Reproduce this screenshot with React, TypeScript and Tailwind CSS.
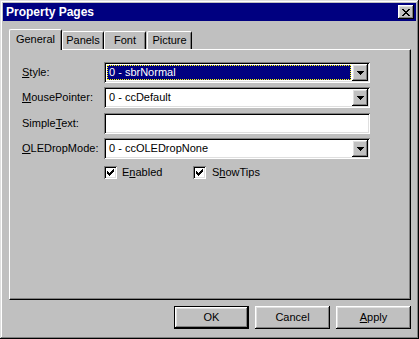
import type { ReactNode } from "react";

const raised =
  "shadow-[inset_-1px_-1px_0_#000,inset_1px_1px_0_#fff,inset_-2px_-2px_0_#808080,inset_2px_2px_0_#dfdfdf]";
const sunken =
  "shadow-[inset_1px_1px_0_#808080,inset_-1px_-1px_0_#fff,inset_2px_2px_0_#000,inset_-2px_-2px_0_#dfdfdf]";

const Arrow = () => (
  <svg width="7" height="4" viewBox="0 0 7 4" shapeRendering="crispEdges">
    <path d="M0 0h7v1H0zM1 1h5v1H1zM2 2h3v1H2zM3 3h1v1H3z" fill="#000" />
  </svg>
);

const Combo = ({ value, focused }: { value: string; focused?: boolean }) => (
  <div className={`flex h-[21px] w-[266px] bg-white p-[2px] ${sunken}`}>
    <div className="flex flex-1 items-center pl-[1px] pr-[1px]">
      {focused ? (
        <div className="flex h-[15px] flex-1 items-center border border-dotted border-[#ffff00] bg-[#000080] pl-[1px] text-white">
          {value}
        </div>
      ) : (
        <div className="pl-[2px]">{value}</div>
      )}
    </div>
    <div className={`flex h-[17px] w-[16px] items-center justify-center bg-[#c0c0c0] ${raised}`}>
      <Arrow />
    </div>
  </div>
);

const Label = ({ children }: { children: ReactNode }) => (
  <div className="w-[82px] shrink-0">{children}</div>
);

const Check = () => (
  <div className={`flex h-[13px] w-[13px] items-center justify-center bg-white ${sunken}`}>
    <svg width="7" height="7" viewBox="0 0 7 7" shapeRendering="crispEdges">
      <path d="M6 0h1v3H6zM5 1h1v3H5zM4 2h1v3H4zM3 3h1v3H3zM2 4h1v3H2zM1 3h1v3H1zM0 2h1v3H0z" fill="#000" />
    </svg>
  </div>
);

const Tab = ({ label, active, w }: { label: string; active?: boolean; w: string }) => (
  <div
    className={`relative flex items-center justify-center rounded-t-[2px] border-l border-t border-r border-l-white border-t-white border-r-black bg-[#c0c0c0] ${w} ${
      active ? "z-10 -mb-px h-[21px] pb-[2px]" : "h-[18px]"
    }`}
  >
    <div className="absolute bottom-0 right-0 top-[1px] w-px bg-[#808080]" />
    {label}
  </div>
);

const Button = ({ children, def }: { children: ReactNode; def?: boolean }) => (
  <div className={`h-[23px] w-[75px] ${def ? "border border-black" : ""}`}>
    <div className={`flex h-full w-full items-center justify-center bg-[#c0c0c0] ${raised}`}>
      {children}
    </div>
  </div>
);

export default function App() {
  return (
    <div
      className={`h-[339px] w-[419px] bg-[#c0c0c0] p-[3px] text-[11px] text-black shadow-[inset_-1px_-1px_0_#000,inset_1px_1px_0_#dfdfdf,inset_-2px_-2px_0_#808080,inset_2px_2px_0_#fff] [font-family:'Liberation_Sans',Arial,sans-serif]`}
    >
      <div className="flex h-[18px] items-center justify-between bg-[#000080] pl-[3px] pr-[2px]">
        <span className="text-[12px] font-bold text-white">Property Pages</span>
        <div className={`flex h-[14px] w-[16px] items-center justify-center bg-[#c0c0c0] ${raised}`}>
          <svg width="8" height="7" viewBox="0 0 8 7" shapeRendering="crispEdges">
            <path d="M0 0h2v1H0zM6 0h2v1H6zM1 1h2v1H1zM5 1h2v1H5zM2 2h4v1H2zM3 3h2v1H3zM2 4h4v1H2zM1 5h2v1H1zM5 5h2v1H5zM0 6h2v1H0zM6 6h2v1H6z" fill="#000" />
          </svg>
        </div>
      </div>

      <div className="ml-[6px] mt-[8px] w-[402px]">
        <div className="flex items-end">
          <Tab label="General" active w="w-[53px]" />
          <Tab label="Panels" w="w-[42px]" />
          <Tab label="Font" w="w-[42px]" />
          <Tab label="Picture" w="ml-px w-[45px]" />
        </div>
        <div className="h-[251px] border-l border-t border-r border-b border-l-white border-t-white border-r-black border-b-black">
          <div className="h-full border-b border-r border-b-[#808080] border-r-[#808080] pl-[12px] pt-[12px]">
            <div className="flex h-[21px] items-center">
              <Label>
                <u>S</u>tyle:
              </Label>
              <Combo value="0 - sbrNormal" focused />
            </div>
            <div className="mt-[4px] flex h-[21px] items-center">
              <Label>
                <u>M</u>ousePointer:
              </Label>
              <Combo value="0 - ccDefault" />
            </div>
            <div className="mt-[5px] flex h-[21px] items-center">
              <Label>
                Simple<u>T</u>ext:
              </Label>
              <div className={`h-[21px] w-[266px] bg-white ${sunken}`} />
            </div>
            <div className="mt-[4px] flex h-[21px] items-center">
              <Label>
                <u>O</u>LEDropMode:
              </Label>
              <Combo value="0 - ccOLEDropNone" />
            </div>
            <div className="mt-[5px] flex items-center pl-[82px]">
              <div className="flex w-[89px] items-center gap-[5px]">
                <Check />
                <span>
                  E<u>n</u>abled
                </span>
              </div>
              <div className="flex items-center gap-[6px]">
                <Check />
                <span>
                  S<u>h</u>owTips
                </span>
              </div>
            </div>
          </div>
        </div>
        <div className="mt-[6px] flex justify-end gap-[6px]">
          <Button def>OK</Button>
          <Button>Cancel</Button>
          <Button>
            <span>
              <u>A</u>pply
            </span>
          </Button>
        </div>
      </div>
    </div>
  );
}
